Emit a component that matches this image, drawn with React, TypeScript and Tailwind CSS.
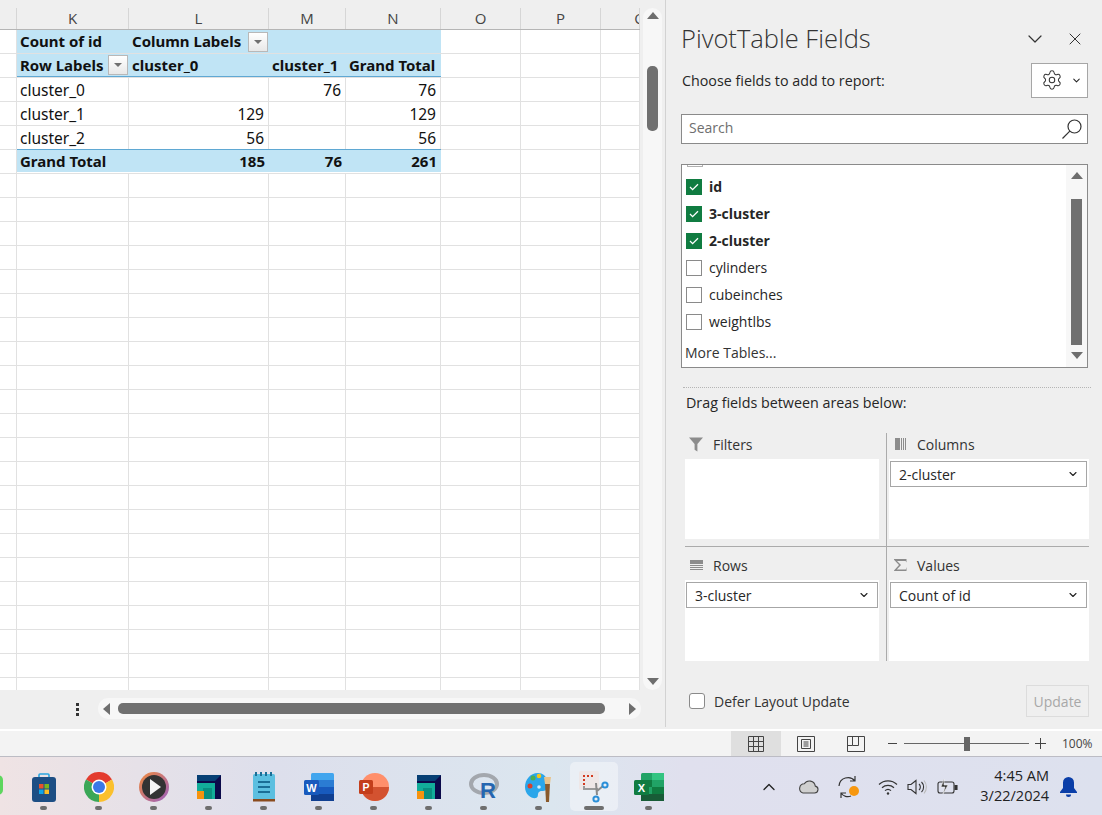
import { ChevronDown, ChevronUp, Settings, X } from "lucide-react";

const colLetters = ["K", "L", "M", "N", "O", "P", "Q"];
const colWidths = ["w-[112px]", "w-[140px]", "w-[77px]", "w-[95px]", "w-[80px]", "w-[80px]", "w-[39px]"];

const FilterBtn = () => (
  <span className="flex w-[20px] h-[20px] shrink-0 items-center justify-center border border-[#b8b8b8] bg-gradient-to-b from-white to-[#e8e8e8]">
    <span className="w-0 h-0 border-l-[4px] border-r-[4px] border-t-[4px] border-l-transparent border-r-transparent border-t-[#707070]" />
  </span>
);

const Cell = ({ w, right, children }: { w: string; right?: boolean; children?: React.ReactNode }) => (
  <div
    className={`${w} h-full shrink-0 flex items-center border-r border-[#e1e1e1] pl-[3px] pr-[4px] pt-[2px] text-[15.5px] text-[#111] ${right ? "justify-end" : ""}`}
  >
    {children}
  </div>
);

const BlueCell = ({ w, right, tight, children }: { w: string; right?: boolean; tight?: boolean; children?: React.ReactNode }) => (
  <div className={`${w} h-full shrink-0 flex items-center text-[15px] font-bold text-[#111] ${right ? "justify-end pr-[4px]" : "justify-between pl-[3px]"} ${tight ? "pr-[1px]" : ""}`}>
    {children}
  </div>
);

const dataRows = [
  ["cluster_0", "", "76", "76"],
  ["cluster_1", "129", "", "129"],
  ["cluster_2", "56", "", "56"],
];

const Sheet = () => (
  <div className="w-[640px] h-[690px] overflow-hidden bg-white font-['Noto_Sans',sans-serif]">
    <div className="flex h-[30px] bg-[#efefef] border-b-[1.5px] border-[#b5b5b5]">
      <div className="w-[17px] shrink-0 border-r border-[#d6d6d6] mt-[8px]" />
      {colLetters.map((l, i) => (
        <div key={l} className={`${colWidths[i]} shrink-0 overflow-hidden border-r border-[#d6d6d6] mt-[8px] flex items-center text-[15px] text-[#444] font-['Open_Sans',sans-serif]`}>
          <span className={`text-center shrink-0 ${l === "Q" ? "w-[78px]" : "w-full"}`}>{l}</span>
        </div>
      ))}
    </div>
    {/* pivot header */}
    <div className="flex h-[24px] border-b border-[#e1e1e1]">
      <div className="w-[17px] shrink-0 border-r border-[#e1e1e1]" />
      <div className="flex w-[424px] h-full bg-[#c0e4f5]">
        <BlueCell w={colWidths[0]}>Count of id</BlueCell>
        <BlueCell w={colWidths[1]} tight>
          Column Labels
          <FilterBtn />
        </BlueCell>
      </div>
      <Cell w={colWidths[4]} />
      <Cell w={colWidths[5]} />
      <Cell w={colWidths[6]} />
    </div>
    <div className="flex h-[24px] border-b border-[#e1e1e1]">
      <div className="w-[17px] shrink-0 border-r border-[#e1e1e1]" />
      <div className="flex w-[424px] h-full bg-[#c0e4f5] border-b border-[#5fa8d3]">
        <BlueCell w={colWidths[0]} tight>
          Row Labels
          <FilterBtn />
        </BlueCell>
        <BlueCell w={colWidths[1]}>cluster_0</BlueCell>
        <BlueCell w={colWidths[2]}>cluster_1</BlueCell>
        <BlueCell w={colWidths[3]}>Grand Total</BlueCell>
      </div>
      <Cell w={colWidths[4]} />
      <Cell w={colWidths[5]} />
      <Cell w={colWidths[6]} />
    </div>
    {dataRows.map((r) => (
      <div key={r[0]} className="flex h-[24px] border-b border-[#e1e1e1]">
        <div className="w-[17px] shrink-0 border-r border-[#e1e1e1]" />
        <Cell w={colWidths[0]}>{r[0]}</Cell>
        <Cell w={colWidths[1]} right>{r[1]}</Cell>
        <Cell w={colWidths[2]} right>{r[2]}</Cell>
        <Cell w={colWidths[3]} right>{r[3]}</Cell>
        <Cell w={colWidths[4]} />
        <Cell w={colWidths[5]} />
        <Cell w={colWidths[6]} />
      </div>
    ))}
    <div className="flex h-[24px] border-b border-[#e1e1e1]">
      <div className="w-[17px] shrink-0 border-r border-[#e1e1e1]" />
      <div className="flex w-[424px] h-full bg-[#c0e4f5] border-t border-[#5fa8d3] -mt-px">
        <BlueCell w={colWidths[0]}>Grand Total</BlueCell>
        <BlueCell w={colWidths[1]} right>185</BlueCell>
        <BlueCell w={colWidths[2]} right>76</BlueCell>
        <BlueCell w={colWidths[3]} right>261</BlueCell>
      </div>
      <Cell w={colWidths[4]} />
      <Cell w={colWidths[5]} />
      <Cell w={colWidths[6]} />
    </div>
    {Array.from({ length: 22 }).map((_, i) => (
      <div key={i} className="flex h-[24px] border-b border-[#e1e1e1]">
        <div className="w-[17px] shrink-0 border-r border-[#e1e1e1]" />
        {colWidths.map((w) => (
          <Cell key={w + i} w={w} />
        ))}
      </div>
    ))}
  </div>
);

const VScroll = () => (
  <div className="w-[25px] h-[690px] bg-[#efefef] pl-[3px] pt-[8px]">
    <div className="w-[19px] h-[682px] rounded-[10px] bg-[#f7f7f7] flex flex-col items-center">
      <span className="mt-[4px] w-0 h-0 border-l-[6px] border-r-[6px] border-b-[7px] border-l-transparent border-r-transparent border-b-[#6e6e6e]" />
      <div className="mt-[47px] w-[11px] h-[65px] rounded-[5px] bg-[#707070]" />
      <div className="flex-1" />
      <span className="mb-[5px] w-0 h-0 border-l-[6px] border-r-[6px] border-t-[7px] border-l-transparent border-r-transparent border-t-[#6e6e6e]" />
    </div>
  </div>
);

const HScroll = () => (
  <div className="h-[37px] bg-[#efefef] flex items-start pt-[8px]">
    <div className="w-[76px]" />
    <div className="w-[3px] mt-[5px] flex flex-col gap-[2px]">
      <span className="w-[3px] h-[3px] bg-[#333]" />
      <span className="w-[3px] h-[3px] bg-[#333]" />
      <span className="w-[3px] h-[3px] bg-[#333]" />
    </div>
    <div className="ml-[19px] w-[543px] h-[21px] rounded-[10px] bg-[#f7f7f7] flex items-center pl-[5px] pr-[5px]">
      <span className="w-0 h-0 border-t-[6px] border-b-[6px] border-r-[7px] border-t-transparent border-b-transparent border-r-[#6e6e6e]" />
      <div className="ml-[8px] w-[487px] h-[11px] rounded-[5px] bg-[#707070]" />
      <div className="flex-1" />
      <span className="w-0 h-0 border-t-[6px] border-b-[6px] border-l-[7px] border-t-transparent border-b-transparent border-l-[#6e6e6e]" />
    </div>
  </div>
);

const CheckRow = ({ label, on }: { label: string; on?: boolean }) => (
  <div className="flex h-[27px] items-center pl-[4px]">
    {on ? (
      <span className="w-[16px] h-[16px] bg-[#107c41] flex items-center justify-center">
        <svg width="10" height="8" viewBox="0 0 10 8" fill="none" stroke="#fff" strokeWidth="1.3"><path d="M1 4l2.6 2.6L9 1.2" /></svg>
      </span>
    ) : (
      <span className="w-[16px] h-[16px] border border-[#8a8a8a] bg-white" />
    )}
    <span className={`ml-[7px] text-[14px] text-[#262626] ${on ? "font-bold" : ""}`}>{label}</span>
  </div>
);

const Dropdown = ({ label, w }: { label: string; w: string }) => (
  <div className={`${w} h-[26px] bg-white border border-[#a6a6a6] flex items-center justify-between pl-[8px] pr-[7px] text-[14px] text-[#262626]`}>
    {label}
    <ChevronDown size={12} strokeWidth={2.2} color="#222" />
  </div>
);

const AreaLabel = ({ icon, label }: { icon: React.ReactNode; label: string }) => (
  <div className="h-[22px] mb-[4px] flex items-center text-[14px] text-[#333]">
    <span className="w-[14px] h-[16px] flex items-center justify-center ml-[4px]">{icon}</span>
    <span className="ml-[10px]">{label}</span>
  </div>
);

const FilterIcon = () => (
  <svg width="15" height="15" viewBox="0 0 15 15" fill="#8c8c8c"><path d="M0 0h15L9 7v8L6 13V7z" /></svg>
);
const ColumnsIcon = () => (
  <svg width="11" height="12" viewBox="0 0 11 12" fill="#8c8c8c"><rect width="5" height="12" /><rect x="6" width="1" height="12" /><rect x="8" width="1" height="12" /><rect x="10" width="1" height="12" /></svg>
);
const RowsIcon = () => (
  <svg width="13" height="11" viewBox="0 0 13 11" fill="#8c8c8c"><rect width="13" height="4" /><rect y="5" width="13" height="1" /><rect y="7" width="13" height="1" /><rect y="9" width="13" height="1" /></svg>
);
const SigmaIcon = () => (
  <svg width="13" height="12" viewBox="0 0 13 12" fill="#8c8c8c"><path d="M0 0h12.5v3.5L11.6 2H3l4 4-4.2 4.4h9l.7-2.4V12H0v-.6L5 6 0 .7z" /></svg>
);

const Pane = () => (
  <div className="w-[437px] h-[727px] mt-0 flex flex-col border-l border-[#d2d2d2] bg-[#efefef] pl-[15px] text-[#262626]">
    <div className="flex h-[63px] items-center pt-[14px]">
      <span className="text-[25.5px] font-light text-[#333]">PivotTable Fields</span>
      <div className="flex-1" />
      <ChevronDown size={24} strokeWidth={1.2} color="#333" />
      <X size={20} strokeWidth={1.2} color="#333" className="ml-[18px] mr-[17px]" />
    </div>
    <div className="flex h-[34px] items-center pr-[14px]">
      <span className="ml-px pt-[2px] text-[14.3px]">Choose fields to add to report:</span>
      <div className="flex-1" />
      <div className="w-[57px] h-[35px] bg-white border border-[#a6a6a6] flex items-center justify-center gap-[8px] pl-[3px]">
        <Settings size={22} strokeWidth={1.1} color="#333" />
        <ChevronDown size={11} strokeWidth={2.2} color="#222" />
      </div>
    </div>
    <div className="mt-[17px] mr-[14px] h-[30px] bg-white border border-[#8a8a8a] flex items-center justify-between pl-[7px] pr-[4px] text-[14px] text-[#6e6e6e]">
      <span className="pb-[3px]">Search</span>
      <svg width="22" height="22" viewBox="0 0 22 22" fill="none" stroke="#333" strokeWidth="1.2"><circle cx="13.5" cy="8.5" r="6.5" /><path d="M8.8 13.2L1.5 20.5" /></svg>
    </div>
    <div className="mt-[20px] mr-[14px] h-[204px] bg-white border border-[#8a8a8a] flex overflow-hidden">
      <div className="flex-1 overflow-hidden">
        <div className="ml-[5px] -mt-px w-[16px] h-[3px] border border-t-0 border-[#b0b0b0]" />
        <div className="mt-[6px]" />
        <CheckRow label="id" on />
        <CheckRow label="3-cluster" on />
        <CheckRow label="2-cluster" on />
        <CheckRow label="cylinders" />
        <CheckRow label="cubeinches" />
        <CheckRow label="weightlbs" />
        <div className="mt-[7px] ml-[3px] text-[14px] text-[#333]">More Tables...</div>
      </div>
      <div className="w-[21px] bg-[#f7f7f7] flex flex-col items-center">
        <span className="mt-[7px] w-0 h-0 border-l-[6px] border-r-[6px] border-b-[7px] border-l-transparent border-r-transparent border-b-[#6e6e6e]" />
        <div className="mt-[20px] w-[11px] h-[146px] bg-[#707070]" />
        <span className="mt-[7px] w-0 h-0 border-l-[6px] border-r-[6px] border-t-[7px] border-l-transparent border-r-transparent border-t-[#6e6e6e]" />
      </div>
    </div>
    <div className="mt-[19px] ml-[2px] mr-[11px] border-t border-dotted border-[#b5b5b5]" />
    <div className="mt-[5px] ml-[5px] h-[20px] flex items-center text-[14.3px]">Drag fields between areas below:</div>
    <div className="mt-[20px] ml-[4px] mr-[13px] grid grid-cols-[202px_202px]">
      <div className="border-r border-b border-[#ababab] pr-[7px] pb-[7px] h-[114px]">
        <AreaLabel icon={<FilterIcon />} label="Filters" />
        <div className="h-[80px] bg-white" />
      </div>
      <div className="border-b border-[#ababab] pl-[2px] pb-[7px] h-[114px]">
        <AreaLabel icon={<ColumnsIcon />} label="Columns" />
        <div className="h-[80px] bg-white px-px pt-[2px]">
          <Dropdown label="2-cluster" w="w-[197px]" />
        </div>
      </div>
      <div className="border-r border-[#ababab] pr-[7px] h-[114px] pt-[7px]">
        <AreaLabel icon={<RowsIcon />} label="Rows" />
        <div className="h-[81px] bg-white px-px pt-[2px]">
          <Dropdown label="3-cluster" w="w-[192px]" />
        </div>
      </div>
      <div className="pl-[2px] h-[114px] pt-[7px]">
        <AreaLabel icon={<SigmaIcon />} label="Values" />
        <div className="h-[81px] bg-white px-px pt-[2px]">
          <Dropdown label="Count of id" w="w-[197px]" />
        </div>
      </div>
    </div>
    <div className="mt-[24px] ml-[8px] mr-[13px] flex items-center">
      <span className="w-[16px] h-[16px] rounded-[3px] border border-[#8a8a8a] bg-white" />
      <span className="ml-[9px] text-[14px] text-[#333]">Defer Layout Update</span>
      <div className="flex-1" />
      <div className="w-[63px] h-[32px] border border-[#dcdcdc] flex items-center justify-center text-[14px] text-[#a8a8a8]">Update</div>
    </div>
  </div>
);

const StatusBar = () => (
  <div className="h-[27px] border-t-[2px] border-white bg-[#f3f3f3] flex items-center text-[#444] shrink-0">
    <div className="w-[731px]" />
    <div className="w-[50px] h-full bg-[#dfdfdf] flex items-center justify-center">
      <svg width="16" height="16" viewBox="0 0 16 16" fill="none" stroke="#444" strokeWidth="1"><path d="M.5.5h15v15H.5zM5.5.5v15M10.5.5v15M.5 5.5h15M.5 10.5h15" /></svg>
    </div>
    <div className="w-[50px] flex justify-center">
      <svg width="18" height="16" viewBox="0 0 18 16" fill="none" stroke="#444" strokeWidth="1"><path d="M.5.5h17v15H.5z" /><path d="M4.5 3.5h9v9h-9zM6.5 6h5M6.5 8h5M6.5 10h5" /></svg>
    </div>
    <div className="w-[50px] flex justify-center">
      <svg width="18" height="16" viewBox="0 0 18 16" fill="none" stroke="#444" strokeWidth="1"><path d="M.5 15.5V.5h17v15zM.5 9.5h5V.5M5.5 9.5h6V.5" /></svg>
    </div>
    <span className="ml-[7px] w-[9px] h-px bg-[#444]" />
    <div className="ml-[7px] w-[125px] h-px bg-[#666] flex items-center">
      <span className="ml-[60px] w-[6px] h-[14px] bg-[#666]" />
    </div>
    <svg className="ml-[6px]" width="11" height="11" viewBox="0 0 11 11" stroke="#444" strokeWidth="1"><path d="M5.5 0v11M0 5.5h11" /></svg>
    <span className="ml-[16px] text-[12px] text-[#444]">100%</span>
  </div>
);

/* taskbar icons */
const Store = () => (
  <svg width="24" height="30" viewBox="0 0 24 30"><path d="M7 7V3q0-1 1-1h8q1 0 1 1v4" fill="none" stroke="#2aa5e0" strokeWidth="1.6" /><rect y="5" width="24" height="25" rx="3" fill="#1d4e84" /><rect x="7" y="12" width="4.5" height="4.5" fill="#e8532b" /><rect x="12.5" y="12" width="4.5" height="4.5" fill="#7ab51d" /><rect x="7" y="17.5" width="4.5" height="4.5" fill="#0ea5e9" /><rect x="12.5" y="17.5" width="4.5" height="4.5" fill="#fbbf24" /></svg>
);
const Chrome = () => (
  <svg width="30" height="30" viewBox="0 0 30 30"><path d="M15 15L2 7.5A15 15 0 0 1 28 7.5z" fill="#e33b2e" /><path d="M15 15L28 7.5A15 15 0 0 1 15 30z" fill="#fbc02d" /><path d="M15 15L15 30A15 15 0 0 1 2 7.5z" fill="#3aa757" /><circle cx="15" cy="15" r="7.5" fill="#fff" /><circle cx="15" cy="15" r="6" fill="#3b78e7" /></svg>
);
const Player = () => (
  <svg width="30" height="30" viewBox="0 0 30 30"><defs><linearGradient id="pl" x1="0" y1="0" x2="1" y2="1"><stop offset="0" stopColor="#f08a3c" /><stop offset="1" stopColor="#9a5fc0" /></linearGradient></defs><circle cx="15" cy="15" r="15" fill="url(#pl)" /><circle cx="15" cy="15" r="12" fill="#333" /><path d="M11 7l11 8-11 8z" fill="#f4f4f4" /></svg>
);
const Squares = () => (
  <svg width="24" height="24" viewBox="0 0 24 24"><rect width="24" height="24" fill="#0b0a4a" /><path d="M0 0h24l-6 6H0z" fill="#063f74" /><path d="M0 8h18v16H0z" fill="#12ad9a" /><path d="M6 13h9v11H6z" fill="#0a8f80" /><path d="M0 16h7v8H0z" fill="#f7930e" /></svg>
);
const Notepad = () => (
  <svg width="22" height="30" viewBox="0 0 22 30"><rect y="2" width="22" height="26" rx="1.5" fill="#5cbfe0" /><rect y="27" width="22" height="2.5" fill="#8a4b1e" /><path d="M3 0v4M8 0v4M13 0v4M18 0v4" stroke="#1a6e96" strokeWidth="2" /><path d="M5 10h12M5 15h12M5 20h12" stroke="#1a6e96" strokeWidth="2" /></svg>
);
const Word = () => (
  <svg width="30" height="28" viewBox="0 0 30 28"><rect x="7" width="23" height="28" rx="1.5" fill="#41a5ee" /><rect x="7" y="7" width="23" height="7" fill="#2b7cd3" /><rect x="7" y="14" width="23" height="7" fill="#185abd" /><rect x="7" y="21" width="23" height="7" fill="#103f91" /><rect y="7" width="15" height="15" rx="1.5" fill="#185abd" /><text x="7.5" y="19" textAnchor="middle" fontSize="11" fontWeight="700" fill="#fff" fontFamily="Liberation Sans">W</text></svg>
);
const Ppt = () => (
  <svg width="30" height="28" viewBox="0 0 30 28"><circle cx="16" cy="14" r="14" fill="#ff8f6b" /><path d="M16 14h14a14 14 0 0 1-28 0z" fill="#d35230" /><rect y="7" width="14" height="14" rx="1.5" fill="#c43e1c" /><text x="7" y="18" textAnchor="middle" fontSize="10.5" fontWeight="700" fill="#fff" fontFamily="Liberation Sans">P</text></svg>
);
const RLogo = () => (
  <svg width="32" height="34" viewBox="0 0 32 34"><ellipse cx="16" cy="14" rx="13" ry="9" fill="none" stroke="#a3a7ad" strokeWidth="4" /><text x="20" y="28" textAnchor="middle" fontSize="22" fontWeight="700" fill="#2566b0" fontFamily="Liberation Sans">R</text></svg>
);
const Paint = () => (
  <svg width="28" height="30" viewBox="0 0 28 30"><path d="M13 1C5 1 0 8 0 15c0 8 7 12 11 11 3-1 1-4 3-6 2-2 6 0 8-3 2-4 1-16-9-16z" fill="#2aa6ea" /><circle cx="5" cy="14" r="2.5" fill="#d8402b" /><circle cx="8" cy="6" r="2.5" fill="#4caf50" /><circle cx="14" cy="4" r="2.3" fill="#f5c518" /><circle cx="14" cy="15" r="1.8" fill="#cfeefc" /><path d="M20 11h5l-1 19h-3z" fill="#8a5a2b" /><path d="M19 5l7 0-1 7h-5z" fill="#e8c38c" /></svg>
);
const Snip = () => (
  <svg width="30" height="32" viewBox="0 0 30 32"><rect width="20" height="19" rx="2" fill="#eee7e7" /><path d="M4 4h2v2H4zM8 4h2v2H8zM12 4h2v2h-2zM4 8h2v2H4zM4 12h2v2H4z" fill="#d33a1f" /><path d="M5 15v3h14" stroke="#9a9a9a" strokeWidth="2" fill="none" /><path d="M17 12l1 12" stroke="#8a8a8a" strokeWidth="2" /><path d="M18 20l6-5" stroke="#8a8a8a" strokeWidth="2" /><circle cx="26" cy="14" r="2.6" fill="none" stroke="#2a8fd8" strokeWidth="2" /><circle cx="17" cy="28" r="2.6" fill="none" stroke="#2a8fd8" strokeWidth="2" /></svg>
);
const Excel = () => (
  <svg width="30" height="28" viewBox="0 0 30 28"><rect x="7" width="23" height="28" rx="1.5" fill="#21a366" /><rect x="18" width="12" height="7" fill="#33c481" /><rect x="7" y="7" width="11" height="7" fill="#107c41" /><rect x="18" y="14" width="12" height="7" fill="#107c41" /><rect x="7" y="21" width="23" height="7" fill="#185c37" /><rect y="7" width="15" height="15" rx="1.5" fill="#107c41" /><text x="7.5" y="19" textAnchor="middle" fontSize="11" fontWeight="700" fill="#fff" fontFamily="Liberation Sans">X</text></svg>
);

const TaskIcon = ({ children, active }: { children: React.ReactNode; active?: boolean }) => (
  <div className="w-[55px] shrink-0 flex justify-center">
    <div className={`w-[48px] h-[49px] rounded-[5px] flex flex-col items-center ${active ? "bg-white/40" : ""}`}>
      <div className="h-[43px] pt-[6px] flex items-center justify-center">{children}</div>
      <span className={`h-[4px] rounded-full mt-[1px] ${active ? "w-[20px] bg-[#6e6e6e]" : "w-[7px] bg-[#6e6e6e]"}`} />
    </div>
  </div>
);

const Tray = () => (
  <div className="flex items-center text-[#222] h-full">
    <ChevronUp size={20} strokeWidth={1.6} color="#222" />
    <svg className="ml-[19px]" width="21" height="14" viewBox="0 0 21 14" fill="#cfcfcf" stroke="#444" strokeWidth="1.1"><path d="M5 13h11.5a3.5 3.5 0 0 0 .8-6.9A6 6 0 0 0 6.3 3.8 4.7 4.7 0 0 0 5 13z" /></svg>
    <svg className="ml-[18px]" width="24" height="24" viewBox="0 0 24 24" fill="none" stroke="#333" strokeWidth="1.2"><path d="M2 11a9 9 0 0 1 16-5M18 1v5h-5M14 21a8 8 0 0 1-10-3M4 23v-5h5" /><circle cx="17" cy="16" r="5" fill="#f7970e" stroke="none" /></svg>
    <svg className="ml-[17px]" width="20" height="16" viewBox="0 0 20 16" fill="none" stroke="#333" strokeWidth="1.2"><path d="M1 5.5a13 13 0 0 1 18 0M4 8.7a9 9 0 0 1 12 0M7 11.6a4.5 4.5 0 0 1 6 0" /><circle cx="10" cy="14.5" r="1.2" fill="#333" stroke="none" /></svg>
    <svg className="ml-[9px]" width="20" height="16" viewBox="0 0 20 16" fill="none" stroke="#333" strokeWidth="1.1"><path d="M1 5.5h3L9 1.5v13L4 10.5H1z" /><path d="M12 5a4 4 0 0 1 0 6M14.5 3a7 7 0 0 1 0 10" /><path d="M17 1.5a10 10 0 0 1 0 13" stroke="#bbb" /></svg>
    <svg className="ml-[10px]" width="21" height="18" viewBox="0 0 21 18" fill="none" stroke="#333" strokeWidth="1.1"><rect x="1" y="4" width="16" height="11" rx="2" /><path d="M18 7.5h2v4h-2z" fill="#333" /><path d="M7 1L4 9h4l-2 7 5-9H7z" fill="#333" stroke="#f0f0f0" strokeWidth=".6" /></svg>
    <div className="ml-[21px] -mt-[3px] w-[70px] flex flex-col items-end text-[14.5px] leading-[20px] text-[#222]">
      <span>4:45 AM</span>
      <span>3/22/2024</span>
    </div>
    <svg className="ml-[11px]" width="17" height="20" viewBox="0 0 17 20" fill="#0a3ea8"><path d="M8.5 0A5.5 5.5 0 0 0 3 5.5V11L0 15v1h17v-1l-3-4V5.5A5.5 5.5 0 0 0 8.5 0z" /><path d="M6 17.5h5a2.5 2.5 0 0 1-5 0z" /></svg>
  </div>
);

const Taskbar = () => (
  <div className="h-[59px] pt-[5px] border-t-[1.5px] border-[#bcbcc4] bg-[linear-gradient(90deg,#efe3e4_0%,#dddfec_25%,#dbe6ef_50%,#e0e0ee_62%,#dde1ee_100%)] flex items-start shrink-0 font-['Open_Sans',sans-serif] overflow-hidden">
    <div className="w-[16px] shrink-0">
      <span className="block mt-[13px] -ml-[7px] w-[10px] h-[20px] rounded-full bg-[#5ed65e]" />
    </div>
    <TaskIcon><Store /></TaskIcon>
    <TaskIcon><Chrome /></TaskIcon>
    <TaskIcon><Player /></TaskIcon>
    <TaskIcon><Squares /></TaskIcon>
    <TaskIcon><Notepad /></TaskIcon>
    <TaskIcon><Word /></TaskIcon>
    <TaskIcon><Ppt /></TaskIcon>
    <TaskIcon><Squares /></TaskIcon>
    <TaskIcon><RLogo /></TaskIcon>
    <TaskIcon><Paint /></TaskIcon>
    <TaskIcon active><Snip /></TaskIcon>
    <TaskIcon><Excel /></TaskIcon>
    <div className="ml-[83px] h-[52px] -mt-[1px]">
      <Tray />
    </div>
  </div>
);

export default function App() {
  return (
    <div className="w-[1102px] h-[815px] overflow-hidden flex flex-col bg-[#efefef] font-['Open_Sans',sans-serif]">
      <div className="flex h-[729px] shrink-0">
        <div className="w-[665px] shrink-0 flex flex-col">
          <div className="flex">
            <Sheet />
            <VScroll />
          </div>
          <HScroll />
        </div>
        <Pane />
      </div>
      <StatusBar />
      <Taskbar />
    </div>
  );
}
